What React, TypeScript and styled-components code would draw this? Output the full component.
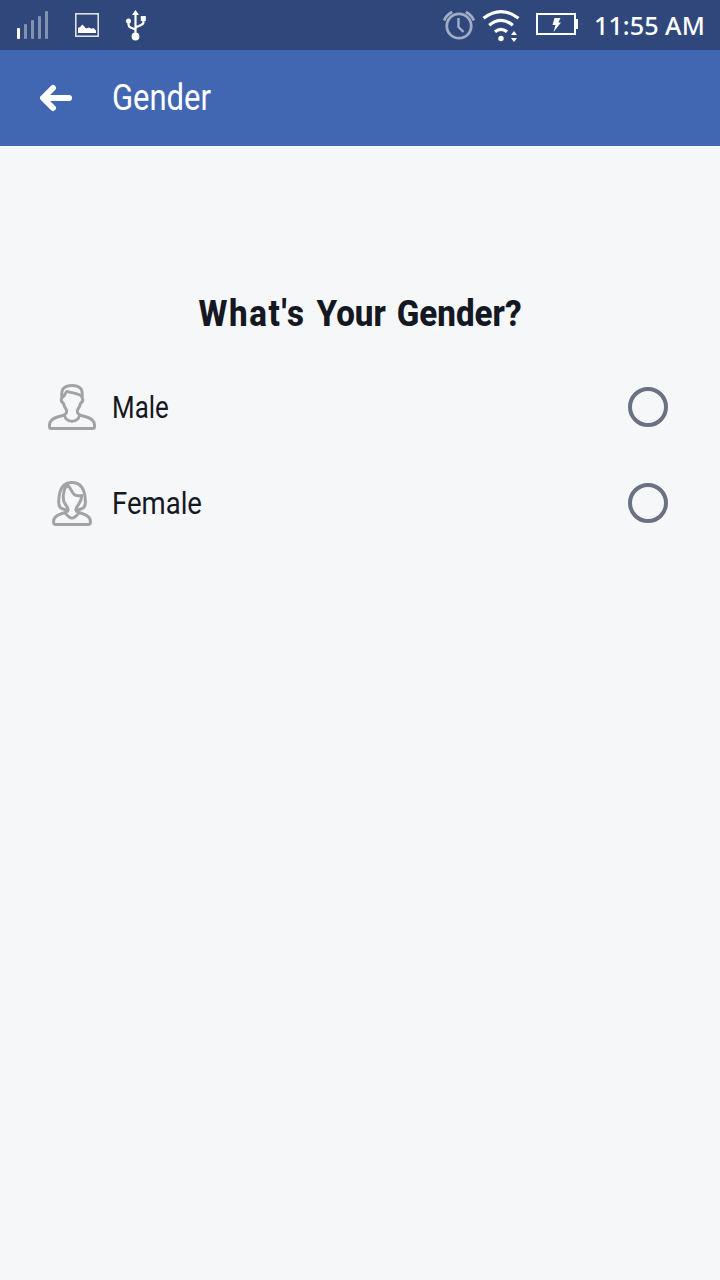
import React from 'react';
import styled, { createGlobalStyle } from 'styled-components';

const GlobalStyle = createGlobalStyle`
  * { box-sizing: border-box; }
  body { margin: 0; background: #f6f7f9; font-family: Roboto, "Liberation Sans", sans-serif; }
`;

const Screen = styled.div`
  display: flex;
  flex-direction: column;
  width: 720px;
  height: 1280px;
  background: #f6f7f9;
  overflow: hidden;
`;

const StatusBar = styled.div`
  display: flex;
  align-items: center;
  justify-content: space-between;
  height: 50px;
  padding: 0 16px;
  background: #2f477a;
  color: #fff;
`;

const StatusGroup = styled.div`
  display: flex;
  align-items: center;
  svg { display: block; flex: none; }
`;

const Clock = styled.span<{ $stretch: number }>`
  display: block;
  width: 110px;
  margin-left: 14px;
  font: 500 26px/50px "Noto Sans", sans-serif;
  white-space: nowrap;
  transform: scaleX(${(p) => p.$stretch});
  transform-origin: left;
`;

const Header = styled.header`
  display: flex;
  align-items: center;
  gap: 40px;
  height: 96px;
  padding-left: 40px;
  background: #4267b2;
  color: #fff;
`;

const BackButton = styled.button`
  display: block;
  padding: 0;
  border: 0;
  background: none;
  svg { display: block; }
`;

const HeaderTitle = styled.h1<{ $stretch: number }>`
  margin: 0;
  font-size: 36px;
  font-weight: 400;
  line-height: 96px;
  transform: scaleX(${(p) => p.$stretch});
  transform-origin: left;
`;

const Content = styled.main`
  display: flex;
  flex-direction: column;
  padding-top: 144px;
`;

const Question = styled.h2<{ $stretch: number }>`
  margin: 0 0 21px;
  font-size: 36px;
  font-weight: 800;
  line-height: 48px;
  text-align: center;
  color: #141823;
  white-space: nowrap;
  word-spacing: 3px;
  transform: scaleX(${(p) => p.$stretch});
`;

const LooseWord = styled.span`
  letter-spacing: 1.8px;
`;

const Option = styled.label`
  display: flex;
  align-items: center;
  height: 96px;
  padding: 0 52px 0 48px;
`;

const Avatar = styled.svg`
  display: block;
  flex: none;
  width: 48px;
  height: 48px;
  fill: none;
  stroke: #a2a4a4;
  stroke-width: 3;
  stroke-linecap: round;
  stroke-linejoin: round;
`;

const OptionName = styled.span<{ $stretch: number }>`
  flex: 1;
  margin-left: 16px;
  font-size: 32px;
  line-height: 48px;
  color: #141823;
  transform: scaleX(${(p) => p.$stretch});
  transform-origin: left;
`;

const Radio = styled.span`
  width: 40px;
  height: 40px;
  border: 4px solid #6a7180;
  border-radius: 50%;
`;

const SystemIcons = () => (
  <svg width="136" height="50" viewBox="16 0 136 50">
    <rect x="17" y="28" width="3" height="11" rx="1" fill="#fff" />
    <g fill="#8291af">
      <rect x="24" y="24" width="3" height="15" rx="1" />
      <rect x="31" y="20" width="3" height="19" rx="1" />
      <rect x="38" y="16" width="3" height="23" rx="1" />
      <rect x="45" y="11" width="3" height="28" rx="1" />
    </g>
    <rect x="75.8" y="13.8" width="22.4" height="22.4" fill="none" stroke="#dce0e9" strokeWidth="1.6" />
    <path d="M78 33v-5l2-1 2.500-2.500 3.500 4 3-1 2.500 1.200 2-.7 2.500 2.500V33z" fill="#fff" />
    <path d="M135.500 35V14M135.500 29.500l-5-2q-2-1-2-3v-3M135.500 27.500l5.500-2.500q2.500-1 2.500-3V19" fill="none" stroke="#fff" strokeWidth="2.200" />
    <path d="M135.500 10l3.500 5h-7zM140.800 16h5v5h-5z" fill="#fff" />
    <circle cx="128.500" cy="21" r="2.500" fill="#fff" />
    <circle cx="135.500" cy="36.500" r="3.900" fill="#fff" />
  </svg>
);

const ConnectionIcons = () => (
  <svg width="138" height="50" viewBox="442 0 138 50">
    <g fill="none" stroke="#a1adc6" strokeWidth="2.800">
      <circle cx="459" cy="26" r="12.200" />
      <path d="M458.500 18v9l5 5" strokeWidth="2.400" />
      <path d="M444.200 20.500q2-5.500 8-8.500M473.800 20.500q-2-5.500-8-8.500" />
    </g>
    <g fill="none" stroke="#fff" strokeWidth="3.200">
      <path d="M483.500 18.200Q501 5 518.500 18.200" />
      <path d="M489.200 25.200Q501 15.500 512.800 25.200" />
      <path d="M495 31.800Q501 26.800 507 31.800" />
    </g>
    <circle cx="501" cy="38.500" r="2.700" fill="#fff" />
    <path d="M514 31l3 4h-6zM514 42l3-4h-6z" fill="#fff" />
    <rect x="537" y="14" width="38" height="20" fill="none" stroke="#fff" strokeWidth="2" />
    <path d="M576 19h2v10h-2zM554.500 18h6l-2.200 4.500h2.700l-7.500 9.500 2-7h-3z" fill="#fff" />
  </svg>
);

const BackArrow = () => (
  <svg width="32" height="28" viewBox="0 0 32 28">
    <path d="M13 4L3 14l10 10M4 14h25" fill="none" stroke="#fff" strokeWidth="6" strokeLinecap="round" strokeLinejoin="round" />
  </svg>
);

const MaleAvatar = () => (
  <Avatar viewBox="0 0 48 48">
    <path d="M14 14.500C13 7 15 2.500 24 2.500s11 4.500 10 12c1.200 2 .5 4.500-1.500 6-.5 2.500-1.500 4-2.500 5.500-1.500 3-.5 5 2.500 6.200l6 1.800c5 1.500 8 4 8 8.200v1.500q0 1.800-1.800 1.800H3.300q-1.800 0-1.800-1.800v-1.500c0-4.200 3-6.700 8-8.200l6-1.800c3-1.200 4-3.200 2.500-6.200-1-1.500-2-3-2.500-5.500-2-1.500-2.700-4-1.500-6z" />
    <path d="M14 14.500c2.500-1 3-2.500 3.700-4.500q.8-2 3-1.200c4.500 1.500 9.500 1.200 13.300 4.700M16.500 32.500c1.500 7.500 13.500 7.500 15 0" />
  </Avatar>
);

const FemaleAvatar = () => (
  <Avatar viewBox="0 0 48 48">
    <path d="M18.500 31C12 29.500 10.500 28 10.700 22 11 12 14 3.500 24 3.500S37 12 37.400 22c.1 6-1.400 7.500-7.900 9" />
    <path d="M19 5.500C14.500 12 14 21 17.500 25.500c2 2.500 3 4 2.500 6-.5 1.500-3 2-6 3-5.500 1.600-8.500 4-8.500 8.500 0 1.500.7 2.500 2.500 2.500h32c1.800 0 2.500-1 2.500-2.500 0-4.500-3-6.900-8.500-8.500-3-1-5.500-1.500-6-3-.5-2 .5-3.500 2.500-6 2.300-2.800 3-5.500 3.300-9-5 1-8.300-.5-9.800-4C22.500 9 21.500 7.500 19 5.500M17 33.500c2 3 3.500 5.500 7 5.500s5-2.500 7-5.500" />
  </Avatar>
);

export default function App() {
  return (
    <Screen>
      <GlobalStyle />
      <StatusBar>
        <StatusGroup><SystemIcons /></StatusGroup>
        <StatusGroup>
          <ConnectionIcons />
          <Clock $stretch={0.97}>11:55 AM</Clock>
        </StatusGroup>
      </StatusBar>
      <Header>
        <BackButton aria-label="Back"><BackArrow /></BackButton>
        <HeaderTitle $stretch={0.86}>Gender</HeaderTitle>
      </Header>
      <Content>
        <Question $stretch={0.92}><LooseWord>What's</LooseWord> Your Gender?</Question>
        <Option>
          <MaleAvatar />
          <OptionName $stretch={0.81}>Male</OptionName>
          <Radio />
        </Option>
        <Option>
          <FemaleAvatar />
          <OptionName $stretch={0.86}>Female</OptionName>
          <Radio />
        </Option>
      </Content>
    </Screen>
  );
}
